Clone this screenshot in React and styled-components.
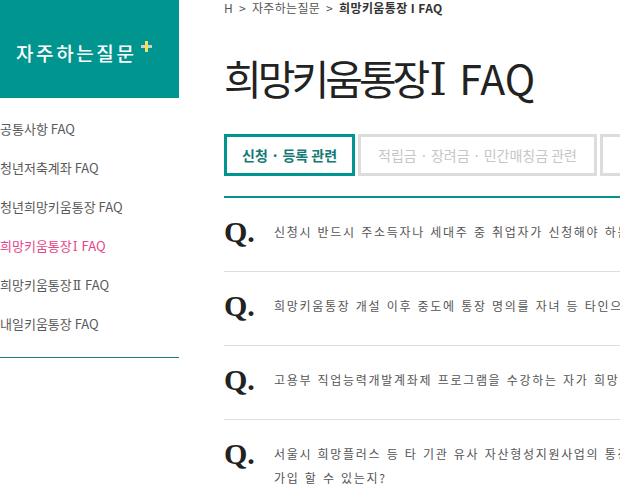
import React from 'react';
import styled, { createGlobalStyle } from 'styled-components';

const GlobalStyle = createGlobalStyle`
  html, body {
    margin: 0;
    padding: 0;
    background: #fff;
    overflow: hidden;
  }
  body {
    font-family: "Noto Sans CJK KR", "Noto Sans", sans-serif;
    color: #555;
  }
  ul { margin: 0; padding: 0; list-style: none; }
`;

const Page = styled.div`
  display: flex;
  align-items: flex-start;
  width: 1000px;
`;

const Sidebar = styled.aside`
  width: 179px;
  flex-shrink: 0;
`;

const SideHeader = styled.div`
  height: 98px;
  background: #00968f;
  display: flex;
  align-items: center;
  padding-left: 16px;
  padding-top: 8px;
  box-sizing: border-box;
`;

const SideTitle = styled.h2`
  margin: 0;
  color: #fff;
  font-size: 19px;
  font-weight: 500;
  letter-spacing: 2.6px;
  line-height: 20px;
`;

const Plus = styled.svg`
  margin-left: 5px;
  margin-bottom: 14px;
`;

const SideMenu = styled.ul`
  padding: 11px 0 14px;
  border-bottom: 1px solid #1b807c;
`;

const SideItem = styled.li`
  font-size: 13px;
  line-height: 39px;
  height: 39px;
  color: ${p => (p.$active ? '#e8448a' : '#5a5a5a')};
  white-space: nowrap;
`;

const Numeral = styled.span`
  font-family: "DejaVu Serif", "Liberation Serif", serif;
  font-weight: 400;
  font-size: ${p => p.$size || '0.95em'};
  line-height: 1;
  letter-spacing: 0;
  margin: 0 ${p => p.$gap || '0'};
`;

const Main = styled.main`
  padding-left: 45px;
  width: 760px;
  flex-shrink: 0;
`;

const Breadcrumb = styled.div`
  font-size: 12px;
  line-height: 16px;
  color: #555;
  letter-spacing: 0.3px;

  span { margin: 0 6px; }
  strong { color: #333; font-weight: 700; letter-spacing: 0.4px; }
`;

const PageTitle = styled.h1`
  margin: 36px 0 0;
  height: 50px;
  font-size: 41px;
  line-height: 50px;
  font-weight: 400;
  color: #222;
  white-space: nowrap;
`;

const TitleKo = styled.span`
  letter-spacing: -4px;
`;

const Tabs = styled.div`
  display: flex;
  gap: 3px;
  margin-top: 32px;
`;

const Tab = styled.button`
  height: 42px;
  box-sizing: border-box;
  padding: 0 ${p => (p.$active ? 15 : 17)}px;
  background: #fff;
  border: 3px solid ${p => (p.$active ? '#00968f' : '#dcdcdc')};
  color: ${p => (p.$active ? '#137a76' : '#c6c6c6')};
  font-family: "Noto Sans CJK KR", sans-serif;
  font-size: 14px;
  font-weight: ${p => (p.$active ? 700 : 400)};
  white-space: nowrap;
  flex-shrink: 0;
  cursor: pointer;
`;

const FaqList = styled.ul`
  margin-top: 20px;
  border-top: 2px solid #00968f;
`;

const FaqRow = styled.li`
  display: flex;
  align-items: flex-start;
  padding: 19px 0 24px;
  border-bottom: 1px solid #dedede;
`;

const QMark = styled.span`
  width: 50px;
  flex-shrink: 0;
  font-family: "Liberation Serif", serif;
  font-weight: 700;
  font-size: 30px;
  line-height: 30px;
  height: 30px;
  color: #222;
`;

const Question = styled.p`
  margin: 3px 0 0;
  font-size: 12px;
  line-height: 24px;
  letter-spacing: 1.7px;
  word-spacing: 1px;
  color: #555;
  white-space: nowrap;
`;

const menu = [
  ['공통사항 FAQ'],
  ['청년저축계좌 FAQ'],
  ['청년희망키움통장 FAQ'],
  ['희망키움통장', 'Ⅰ', ' FAQ'],
  ['희망키움통장', 'Ⅱ', ' FAQ'],
  ['내일키움통장 FAQ'],
];

const questions = [
  ['신청시 반드시 주소득자나 세대주 중 취업자가 신청해야 하는지?'],
  ['희망키움통장 개설 이후 중도에 통장 명의를 자녀 등 타인으로 변경할 수 있는지?'],
  ['고용부 직업능력개발계좌제 프로그램을 수강하는 자가 희망키움통장에 가입할 수 있는지?'],
  ['서울시 희망플러스 등 타 기관 유사 자산형성지원사업의 통장을 보유한 자도 희망키움통장에', '가입 할 수 있는지?'],
];

export default function App() {
  return (
    <>
      <GlobalStyle />
      <Page>
        <Sidebar>
          <SideHeader>
            <SideTitle>자주하는질문</SideTitle>
            <Plus width="11" height="11" viewBox="0 0 11 11">
              <rect x="0" y="4" width="11" height="3" fill="#c9d0cf" />
              <rect x="4" y="0" width="3" height="11" fill="#f2e25a" />
            </Plus>
          </SideHeader>
          <SideMenu>
            {menu.map(([a, num, b], i) => (
              <SideItem key={i} $active={i === 3}>
                {a}
                {num && <Numeral $gap="1px">{num}</Numeral>}
                {b}
              </SideItem>
            ))}
          </SideMenu>
        </Sidebar>

        <Main>
          <Breadcrumb>
            H<span>&gt;</span>자주하는질문<span>&gt;</span><strong>희망키움통장 I FAQ</strong>
          </Breadcrumb>
          <PageTitle>
            <TitleKo>희망키움통장</TitleKo>
            <Numeral $size="45px" $gap="3px">Ⅰ</Numeral> FAQ
          </PageTitle>

          <Tabs>
            <Tab $active>신청 · 등록 관련</Tab>
            <Tab>적립금 · 장려금 · 민간매칭금 관련</Tab>
            <Tab>해지 관련</Tab>
          </Tabs>

          <FaqList>
            {questions.map((q, i) => (
              <FaqRow key={i}>
                <QMark>Q.</QMark>
                <Question>
                  {q.map((line, j) => (
                    <React.Fragment key={j}>
                      {j > 0 && <br />}
                      {line}
                    </React.Fragment>
                  ))}
                </Question>
              </FaqRow>
            ))}
          </FaqList>
        </Main>
      </Page>
    </>
  );
}
